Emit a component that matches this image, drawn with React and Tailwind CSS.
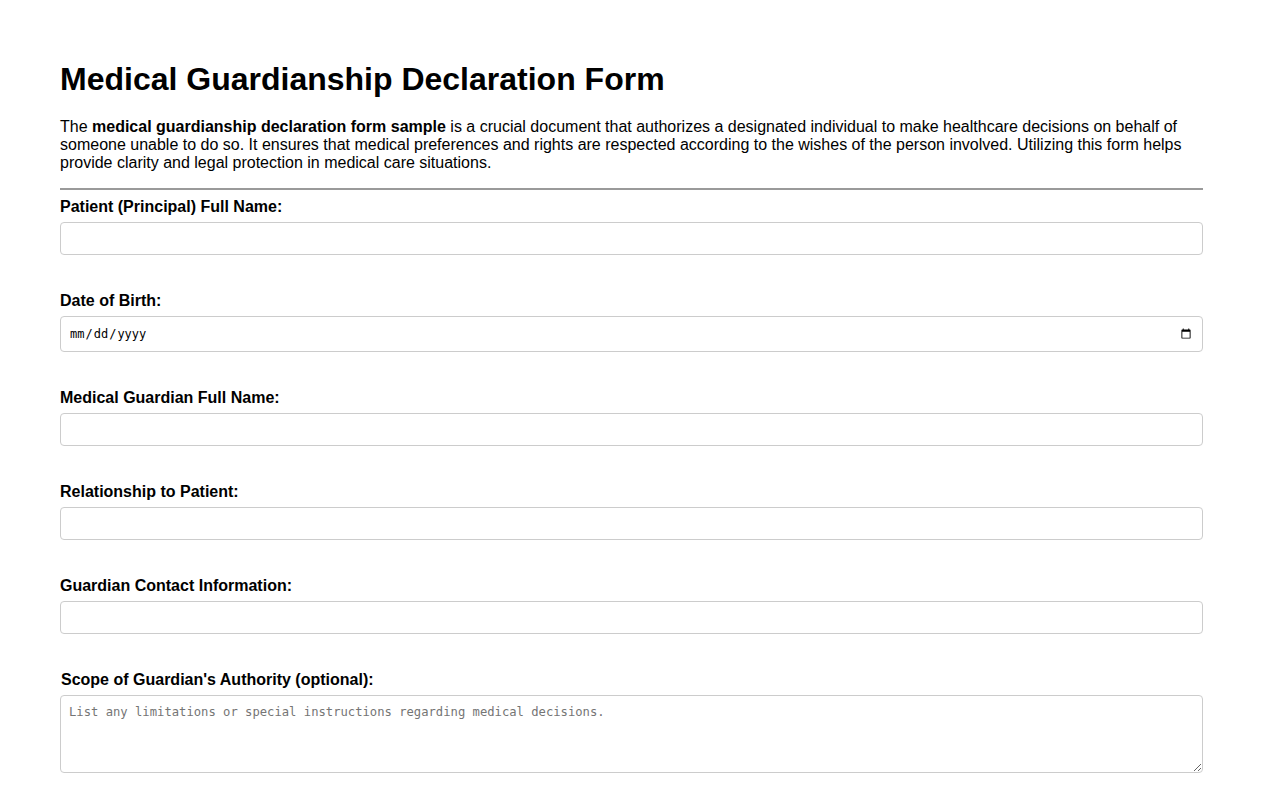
import React from 'react';

const fields = [
  { id: 'patient', label: 'Patient (Principal) Full Name:', type: 'text' },
  { id: 'dob', label: 'Date of Birth:', type: 'date' },
  { id: 'guardian', label: 'Medical Guardian Full Name:', type: 'text' },
  { id: 'relationship', label: 'Relationship to Patient:', type: 'text' },
  { id: 'contact', label: 'Guardian Contact Information:', type: 'text' },
];

function App() {
  return (
    <div className="min-h-screen bg-white px-[60px] pt-[61px] pb-10 text-black font-['Liberation_Sans',Arial,sans-serif]">
      <h1 className="text-[32px] font-bold leading-[37px] mb-5">Medical Guardianship Declaration Form</h1>
      <p className="text-base leading-[18px] mb-4">
        The <strong>medical guardianship declaration form sample</strong> is a crucial document that authorizes a designated individual to make healthcare decisions on behalf of someone unable to do so. It ensures that medical preferences and rights are respected according to the wishes of the person involved. Utilizing this form helps provide clarity and legal protection in medical care situations.
      </p>
      <hr className="border-0 border-t-2 border-[#9a9a9a] mb-2" />
      <form onSubmit={(e) => e.preventDefault()}>
        {fields.map((f) => (
          <div key={f.id} className="mb-[37px]">
            <label htmlFor={f.id} className="block text-base font-bold leading-[18px] mb-[6px]">
              {f.label}
            </label>
            <input
              id={f.id}
              type={f.type}
              className={
                f.type === 'date'
                  ? "block w-full h-[36px] px-2 border border-[#cccccc] rounded-[4px] text-[12px] font-['DejaVu_Sans_Mono',monospace] outline-none"
                  : 'block w-full h-[33px] px-2 border border-[#cccccc] rounded-[4px] text-[13.33px] outline-none'
              }
            />
          </div>
        ))}
        <div>
          <label htmlFor="scope" className="block text-base font-bold leading-[18px] mb-[6px] pl-px">
            Scope of Guardian's Authority (optional):
          </label>
          <textarea
            id="scope"
            rows={4}
            placeholder="List any limitations or special instructions regarding medical decisions."
            className="block w-full h-[78px] px-2 pt-[9px] pb-2 border border-[#cccccc] rounded-[4px] text-[12.2px] leading-[15px] font-['DejaVu_Sans_Mono',monospace] placeholder:text-[#757575] outline-none"
          />
        </div>
      </form>
    </div>
  );
}

export default App;
